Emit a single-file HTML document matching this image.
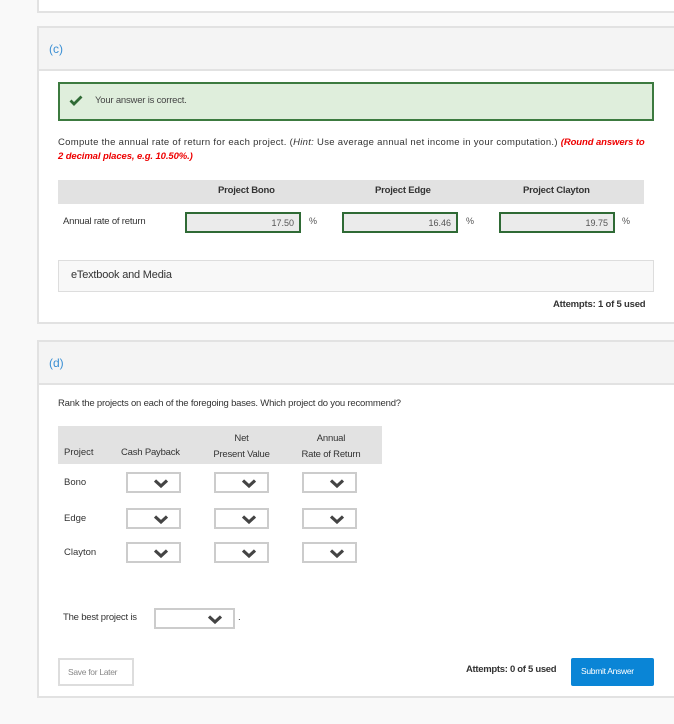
<!DOCTYPE html>
<html><head><meta charset="utf-8"><style>
*{box-sizing:border-box;margin:0;padding:0}
body{width:674px;height:724px;background:#f9f9f9;font-family:"Liberation Sans",sans-serif;color:#333;position:relative;overflow:hidden;font-size:10px}
.a{position:absolute}
.panel{position:absolute;left:37px;width:650px;background:#fff;border:2px solid #e2e2e2}
.hd{position:absolute;left:0;right:0;top:0;height:43px;background:#f4f4f4;border-bottom:2px solid #e2e2e2;color:#3a8fd4;font-size:12px;padding:14px 0 0 10px}
.inp{position:absolute;height:21px;border:2px solid #2f6a35;background:#ebebeb;text-align:right;font-size:9px;color:#555;padding:4px 5px 0 0}
.sel{position:absolute;width:55px;height:21px;border:2px solid #ccc;background:#fff}
.sel svg{position:absolute;right:10px;top:4px}
</style></head><body>
<div class="panel" style="top:-4px;height:17px;border-top:none"></div>

<div class="panel" style="top:26px;height:298px">
 <div class="hd">(c)</div>
</div>
<div class="a" style="left:58px;top:82px;width:596px;height:39px;background:#dfeedc;border:2px solid #3c7a3f"></div>
<svg class="a" style="left:69px;top:95px" width="14" height="11" viewBox="0 0 14 11"><path d="M1.5 5.5 L5 9 L12.5 1.5" stroke="#2f6a35" stroke-width="2.8" fill="none"/></svg>
<div class="a" style="left:95px;top:95px;font-size:9.5px;color:#444;letter-spacing:-0.2px">Your answer is correct.</div>
<div class="a" style="left:58px;top:136px;font-size:9.5px;line-height:14px;color:#333;white-space:nowrap;letter-spacing:0.3px">Compute the annual rate of return for each project. (<i>Hint:</i> Use average annual net income in your computation.) <b style="color:#e00;font-style:italic;letter-spacing:-0.1px">(Round answers to<br>2 decimal places, e.g. 10.50%.)</b></div>
<div class="a" style="left:58px;top:180px;width:586px;height:24px;background:#e2e2e2"></div>
<div class="a" style="left:218px;top:185px;font-size:9.5px;font-weight:bold;color:#333;letter-spacing:-0.2px">Project Bono</div>
<div class="a" style="left:375px;top:185px;font-size:9.5px;font-weight:bold;color:#333;letter-spacing:-0.2px">Project Edge</div>
<div class="a" style="left:523px;top:185px;font-size:9.5px;font-weight:bold;color:#333;letter-spacing:-0.2px">Project Clayton</div>
<div class="a" style="left:63px;top:216px;font-size:9.5px;letter-spacing:-0.2px">Annual rate of return</div>
<div class="inp" style="left:185px;top:212px;width:116px">17.50</div>
<div class="a" style="left:309px;top:216px;font-size:9px;color:#555">%</div>
<div class="inp" style="left:342px;top:212px;width:116px">16.46</div>
<div class="a" style="left:466px;top:216px;font-size:9px;color:#555">%</div>
<div class="inp" style="left:499px;top:212px;width:116px">19.75</div>
<div class="a" style="left:622px;top:216px;font-size:9px;color:#555">%</div>
<div class="a" style="left:58px;top:260px;width:596px;height:32px;background:#f8f8f8;border:1px solid #ddd;font-size:11px;padding:8px 0 0 12px;color:#333;letter-spacing:-0.2px">eTextbook and Media</div>
<div class="a" style="left:553px;top:299px;font-size:9.5px;font-weight:bold;color:#333;letter-spacing:-0.2px">Attempts: 1 of 5 used</div>

<div class="panel" style="top:340px;height:358px">
 <div class="hd">(d)</div>
</div>
<div class="a" style="left:58px;top:398px;font-size:9.5px;letter-spacing:-0.2px">Rank the projects on each of the foregoing bases. Which project do you recommend?</div>
<div class="a" style="left:58px;top:426px;width:324px;height:38px;background:#e2e2e2"></div>
<div class="a" style="left:64px;top:447px;font-size:9.5px">Project</div>
<div class="a" style="left:121px;top:447px;font-size:9.5px;letter-spacing:-0.2px">Cash Payback</div>
<div class="a" style="left:206px;top:431px;font-size:9.5px;text-align:center;width:71px;line-height:16px;letter-spacing:-0.2px">Net<br>Present Value</div>
<div class="a" style="left:293px;top:431px;font-size:9.5px;text-align:center;width:76px;line-height:16px;letter-spacing:-0.2px">Annual<br>Rate of Return</div>
<div class="a" style="left:64px;top:477px;font-size:9.5px">Bono</div>
<div class="a" style="left:64px;top:513px;font-size:9.5px">Edge</div>
<div class="a" style="left:64px;top:547px;font-size:9.5px">Clayton</div>

<div class="sel" style="left:126px;top:472px"><svg width="16" height="11"><path d="M2 2.5 L8 8 L14 2.5" stroke="#444" stroke-width="3.2" fill="none"/></svg></div>
<div class="sel" style="left:214px;top:472px"><svg width="16" height="11"><path d="M2 2.5 L8 8 L14 2.5" stroke="#444" stroke-width="3.2" fill="none"/></svg></div>
<div class="sel" style="left:302px;top:472px"><svg width="16" height="11"><path d="M2 2.5 L8 8 L14 2.5" stroke="#444" stroke-width="3.2" fill="none"/></svg></div>
<div class="sel" style="left:126px;top:508px"><svg width="16" height="11"><path d="M2 2.5 L8 8 L14 2.5" stroke="#444" stroke-width="3.2" fill="none"/></svg></div>
<div class="sel" style="left:214px;top:508px"><svg width="16" height="11"><path d="M2 2.5 L8 8 L14 2.5" stroke="#444" stroke-width="3.2" fill="none"/></svg></div>
<div class="sel" style="left:302px;top:508px"><svg width="16" height="11"><path d="M2 2.5 L8 8 L14 2.5" stroke="#444" stroke-width="3.2" fill="none"/></svg></div>
<div class="sel" style="left:126px;top:542px"><svg width="16" height="11"><path d="M2 2.5 L8 8 L14 2.5" stroke="#444" stroke-width="3.2" fill="none"/></svg></div>
<div class="sel" style="left:214px;top:542px"><svg width="16" height="11"><path d="M2 2.5 L8 8 L14 2.5" stroke="#444" stroke-width="3.2" fill="none"/></svg></div>
<div class="sel" style="left:302px;top:542px"><svg width="16" height="11"><path d="M2 2.5 L8 8 L14 2.5" stroke="#444" stroke-width="3.2" fill="none"/></svg></div>

<div class="a" style="left:63px;top:612px;font-size:9.5px;letter-spacing:-0.2px">The best project is</div>
<div class="sel" style="left:154px;top:608px;width:81px"><svg width="16" height="11"><path d="M2 2.5 L8 8 L14 2.5" stroke="#444" stroke-width="3.2" fill="none"/></svg></div>
<div class="a" style="left:238px;top:612px;font-size:9.5px">.</div>

<div class="a" style="left:58px;top:658px;width:76px;height:28px;border:2px solid #ddd;background:#fff;font-size:8.5px;color:#888;padding:7px 0 0 8px;letter-spacing:-0.3px">Save for Later</div>
<div class="a" style="left:466px;top:664px;font-size:9.5px;font-weight:bold;color:#333;letter-spacing:-0.3px">Attempts: 0 of 5 used</div>
<div class="a" style="left:571px;top:658px;width:83px;height:28px;background:#0a85d6;border-radius:2px;color:#fff;font-size:8.5px;padding:8px 0 0 10px;letter-spacing:-0.3px">Submit Answer</div>
</body></html>
